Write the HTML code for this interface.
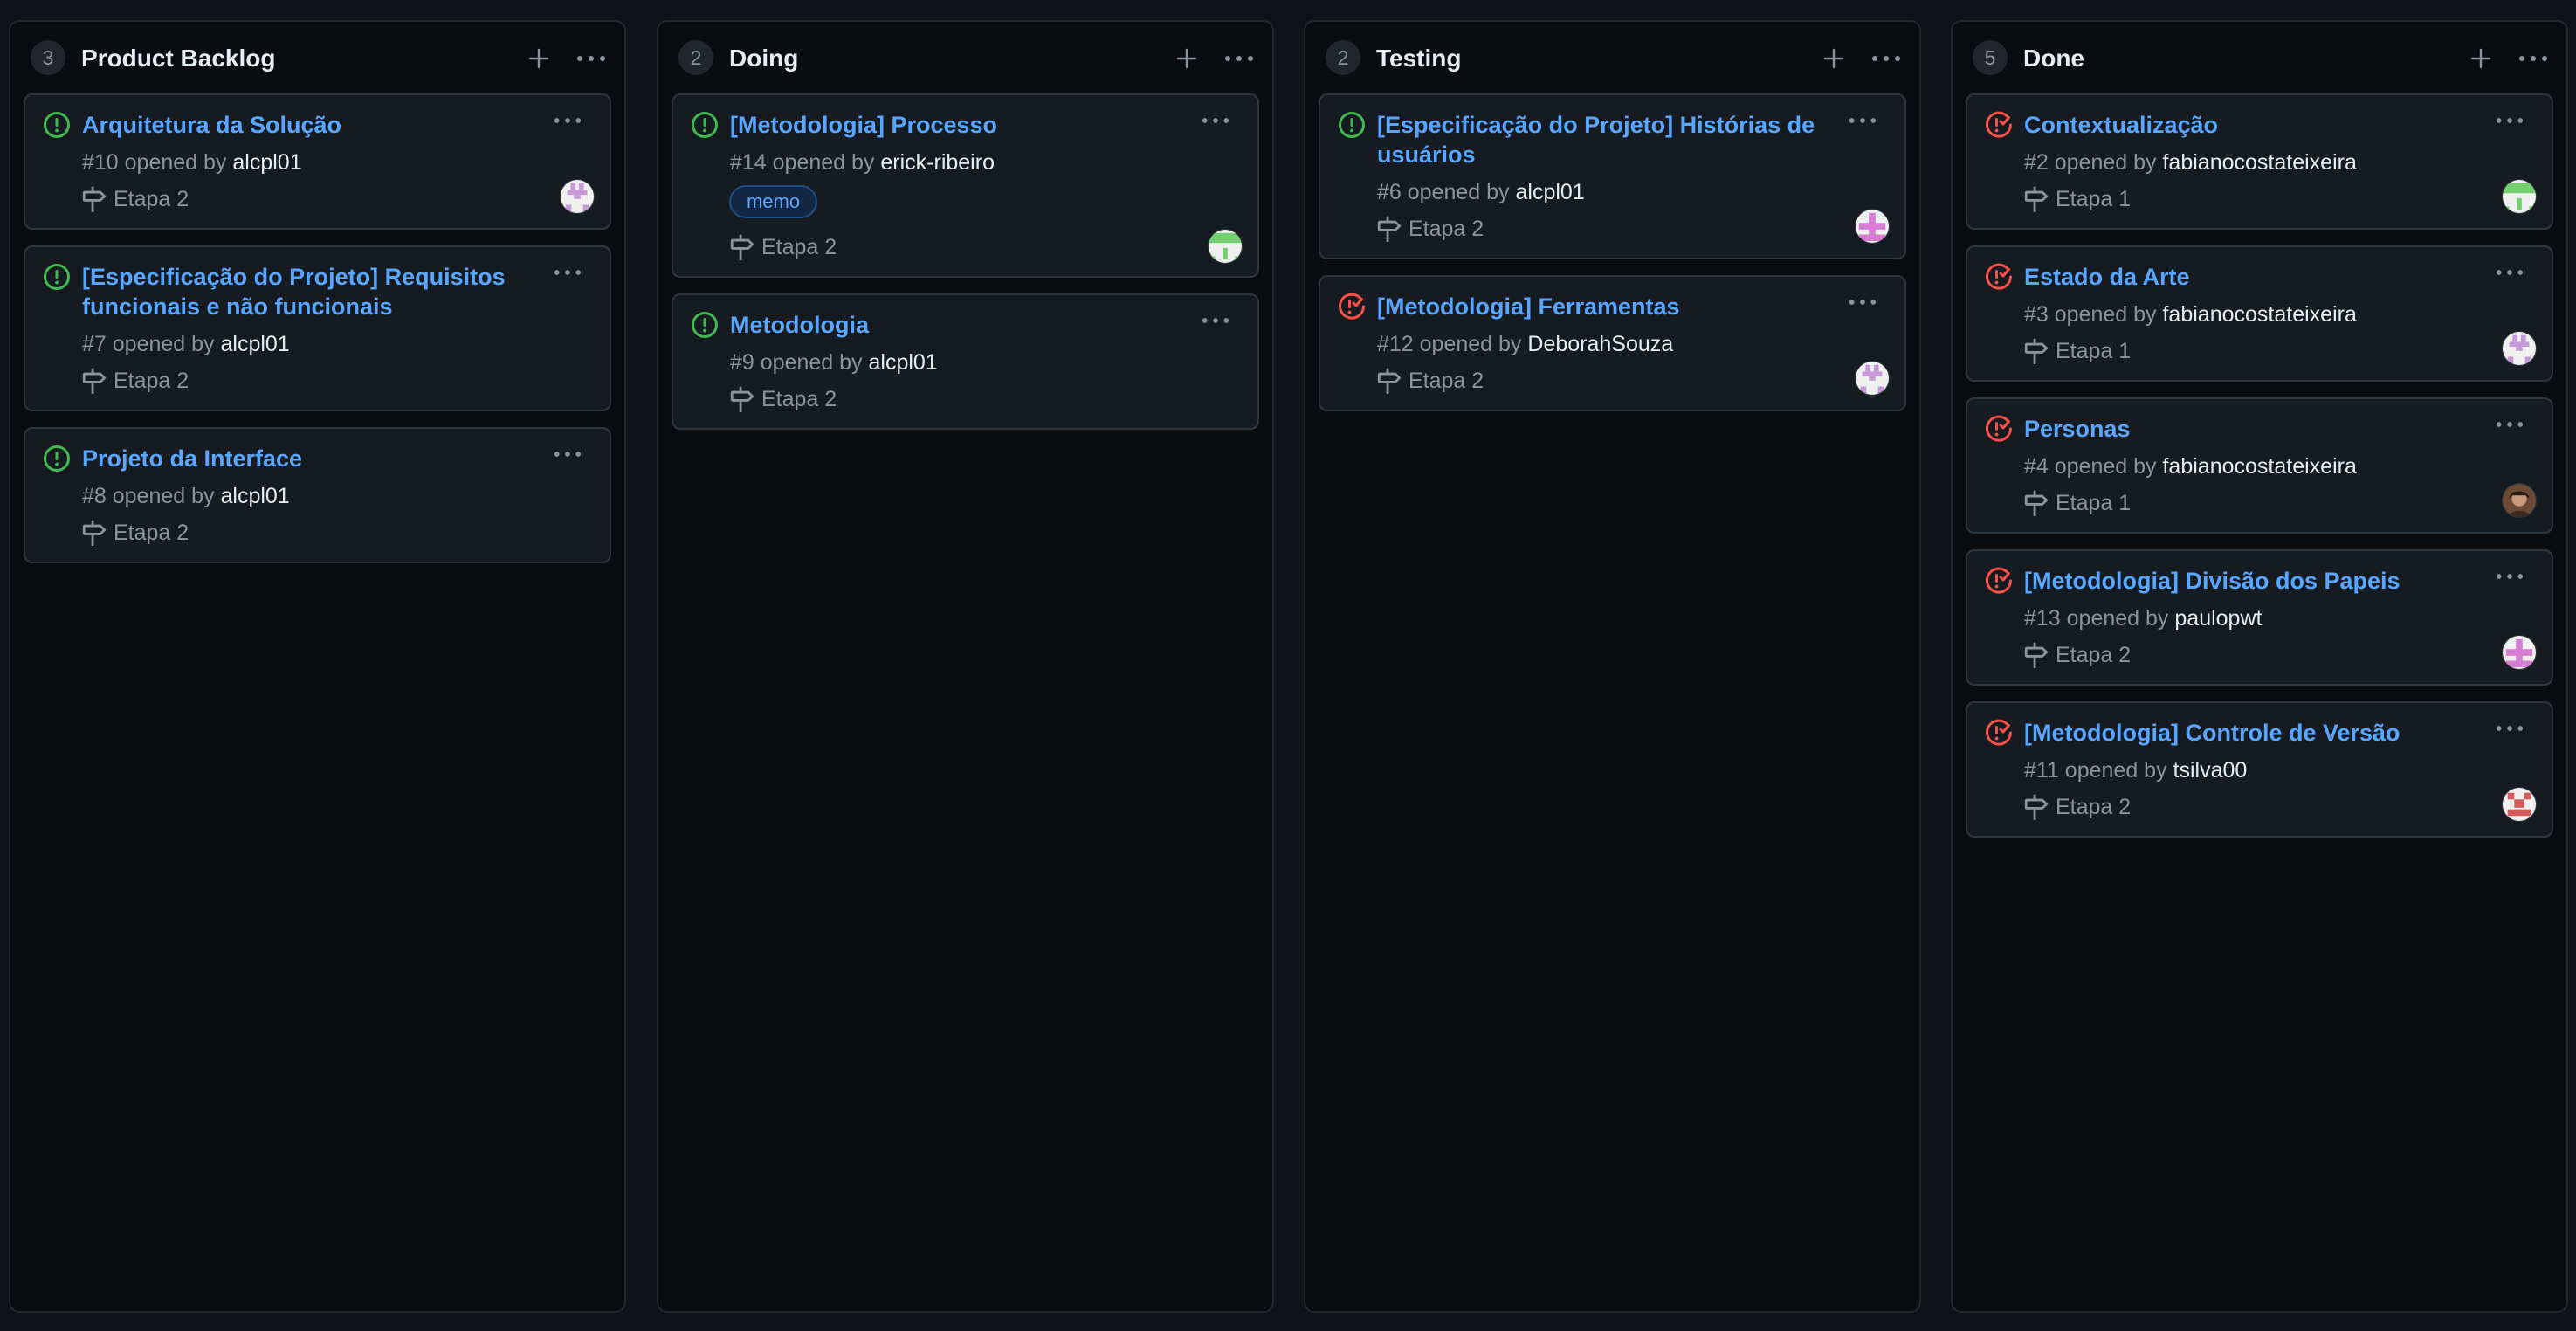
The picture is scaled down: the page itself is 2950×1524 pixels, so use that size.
<!DOCTYPE html>
<html><head><meta charset="utf-8">
<style>
*{box-sizing:border-box;margin:0;padding:0}
html,body{width:2950px;height:1524px;background:#0f1217;overflow:hidden;font-family:"Liberation Sans",sans-serif}
.col{position:absolute;top:23px;width:707px;height:1480px;background:#0a0c10;border:2px solid #23272e;border-radius:12px}
.hdr{position:absolute;top:0;left:0;right:0;height:84px}
.badge{position:absolute;left:23px;top:21px;width:40px;height:40px;border-radius:50%;background:#21262d;color:#8b949e;font-size:23px;line-height:40px;text-align:center}
.htitle{position:absolute;left:81px;top:25px;font-size:28px;font-weight:700;color:#e6edf3;line-height:34px}
.plus{position:absolute;left:593px;top:30px}
.hdots{position:absolute;left:648px;top:38px}
.card{position:absolute;left:15px;width:673px;background:#161b22;border:2px solid #30363d;border-radius:10px;padding:17px 0 0 0}
.ic{position:absolute;left:20px;top:18px}
.title{margin-left:65px;width:530px;font-size:27px;font-weight:700;color:#58a6ff;line-height:34px}
.meta{margin-left:65px;margin-top:6px;font-size:25px;color:#8b949e;line-height:40px;height:40px}
.meta b{font-weight:400;color:#e6edf3}
.et{margin-left:65px;margin-top:2px;font-size:25px;color:#8b949e;line-height:40px;height:40px;display:flex;align-items:center}
.et svg{margin-right:8px;margin-left:-2px}
.cdots{position:absolute;right:32px;top:25px}
.av{position:absolute;right:17px;bottom:16px;width:40px;height:40px;border-radius:50%;overflow:hidden;border:1px solid #30363d}
.memo{margin-left:64px;margin-top:6px;width:101px;height:38px;border:2px solid #1f4d86;background:#112743;border-radius:19px;color:#58a6ff;font-size:22px;line-height:34px;text-align:center}
</style></head><body>

<svg width="0" height="0" style="position:absolute">
<defs>
<symbol id="open" viewBox="0 0 32 32"><circle cx="16" cy="16" r="13.5" fill="none" stroke="#3fb950" stroke-width="3"/><rect x="14.5" y="8" width="3" height="10" rx="1.5" fill="#3fb950"/><circle cx="16" cy="22.5" r="1.9" fill="#3fb950"/></symbol>
<symbol id="closed" viewBox="0 0 32 32"><path d="M25.5 6A13.5 13.5 0 1 0 29.5 16" fill="none" stroke="#f85149" stroke-width="3" stroke-linecap="round"/><rect x="12" y="8" width="3" height="10" rx="1.5" fill="#f85149"/><circle cx="13.5" cy="22.5" r="1.9" fill="#f85149"/><path d="M18 12l3 3 6.5-7.5" fill="none" stroke="#f85149" stroke-width="3" stroke-linecap="round" stroke-linejoin="round"/></symbol>
<symbol id="ms" viewBox="0 0 16 16"><path d="M7.5 1v2M7.5 10v5.5" stroke="#8b949e" stroke-width="1.5" stroke-linecap="round"/><path d="M2.75 3.75h9.4l2.6 2.5-2.6 2.5h-9.4a.5.5 0 0 1-.5-.5v-4a.5.5 0 0 1 .5-.5z" fill="none" stroke="#8b949e" stroke-width="1.5" stroke-linejoin="round"/></symbol>
<symbol id="dots" viewBox="0 0 34 8"><circle cx="4" cy="4" r="3" fill="#8b949e"/><circle cx="17" cy="4" r="3" fill="#8b949e"/><circle cx="30" cy="4" r="3" fill="#8b949e"/></symbol>
<symbol id="plus" viewBox="0 0 24 24"><path d="M12 2v20M2 12h20" stroke="#8b949e" stroke-width="2.4" stroke-linecap="round"/></symbol>
<symbol id="avp" viewBox="0 0 40 40"><rect width="40" height="40" fill="#f0f0f0"/><rect x="12" y="4" width="6" height="8" fill="#c69ad9"/><rect x="22" y="4" width="6" height="8" fill="#c69ad9"/><rect x="8" y="12" width="24" height="6" fill="#c69ad9"/><rect x="16" y="18" width="8" height="5" fill="#c69ad9"/><rect x="6" y="30" width="7" height="8" fill="#c69ad9"/><rect x="27" y="30" width="7" height="8" fill="#c69ad9"/></symbol>
<symbol id="avk" viewBox="0 0 40 40"><rect width="40" height="40" fill="#f0f0f0"/><rect x="16" y="4" width="8" height="32" fill="#d67ed3"/><rect x="4" y="16" width="32" height="8" fill="#d67ed3"/><rect x="4" y="30" width="32" height="8" fill="#d67ed3"/></symbol>
<symbol id="avg" viewBox="0 0 40 40"><rect width="40" height="40" fill="#f0f0f0"/><rect x="0" y="4" width="40" height="12" fill="#72d06e"/><rect x="17" y="22" width="6" height="14" fill="#72d06e"/><rect x="0" y="32" width="8" height="8" fill="#72d06e"/><rect x="32" y="32" width="8" height="8" fill="#72d06e"/></symbol>
<symbol id="avr" viewBox="0 0 40 40"><rect width="40" height="40" fill="#f0f0f0"/><rect x="6" y="6" width="8" height="8" fill="#d55a5a"/><rect x="26" y="6" width="8" height="8" fill="#d55a5a"/><rect x="14" y="14" width="12" height="10" fill="#d55a5a"/><rect x="6" y="26" width="28" height="8" fill="#d55a5a"/></symbol>
<symbol id="avph" viewBox="0 0 40 40"><rect width="40" height="40" fill="#6b4a36"/><circle cx="20" cy="18" r="9" fill="#c79a7c"/><path d="M6 40c2-10 26-10 28 0z" fill="#3a2a22"/><path d="M8 18c0-12 24-12 24 0l-4-4h-16z" fill="#2a1d16"/></symbol>
</defs></svg>

<!-- Column 1 -->
<div class="col" style="left:10px">
 <div class="hdr"><div class="badge">3</div><div class="htitle">Product Backlog</div>
 <svg class="plus" width="24" height="24"><use href="#plus"/></svg><svg class="hdots" width="34" height="8"><use href="#dots"/></svg></div>
 <div class="card" style="top:82px;height:156px"><svg class="ic" width="32" height="32"><use href="#open"/></svg><svg class="cdots" width="32" height="8"><use href="#dots"/></svg>
  <div class="title">Arquitetura da Solução</div><div class="meta">#10 opened by <b>alcpl01</b></div><div class="et"><svg width="30" height="30"><use href="#ms"/></svg>Etapa 2</div><svg class="av"><use href="#avp"/></svg></div>
 <div class="card" style="top:256px;height:190px"><svg class="ic" width="32" height="32"><use href="#open"/></svg><svg class="cdots" width="32" height="8"><use href="#dots"/></svg>
  <div class="title">[Especificação do Projeto] Requisitos funcionais e não funcionais</div><div class="meta">#7 opened by <b>alcpl01</b></div><div class="et"><svg width="30" height="30"><use href="#ms"/></svg>Etapa 2</div></div>
 <div class="card" style="top:464px;height:156px"><svg class="ic" width="32" height="32"><use href="#open"/></svg><svg class="cdots" width="32" height="8"><use href="#dots"/></svg>
  <div class="title">Projeto da Interface</div><div class="meta">#8 opened by <b>alcpl01</b></div><div class="et"><svg width="30" height="30"><use href="#ms"/></svg>Etapa 2</div></div>
</div>

<!-- Column 2 -->
<div class="col" style="left:752px">
 <div class="hdr"><div class="badge">2</div><div class="htitle">Doing</div>
 <svg class="plus" width="24" height="24"><use href="#plus"/></svg><svg class="hdots" width="34" height="8"><use href="#dots"/></svg></div>
 <div class="card" style="top:82px;height:211px"><svg class="ic" width="32" height="32"><use href="#open"/></svg><svg class="cdots" width="32" height="8"><use href="#dots"/></svg>
  <div class="title">[Metodologia] Processo</div><div class="meta">#14 opened by <b>erick-ribeiro</b></div><div class="memo">memo</div><div class="et" style="margin-top:13px"><svg width="30" height="30"><use href="#ms"/></svg>Etapa 2</div><svg class="av" style="bottom:14px"><use href="#avg"/></svg></div>
 <div class="card" style="top:311px;height:156px"><svg class="ic" width="32" height="32"><use href="#open"/></svg><svg class="cdots" width="32" height="8"><use href="#dots"/></svg>
  <div class="title">Metodologia</div><div class="meta">#9 opened by <b>alcpl01</b></div><div class="et"><svg width="30" height="30"><use href="#ms"/></svg>Etapa 2</div></div>
</div>

<!-- Column 3 -->
<div class="col" style="left:1493px">
 <div class="hdr"><div class="badge">2</div><div class="htitle">Testing</div>
 <svg class="plus" width="24" height="24"><use href="#plus"/></svg><svg class="hdots" width="34" height="8"><use href="#dots"/></svg></div>
 <div class="card" style="top:82px;height:190px"><svg class="ic" width="32" height="32"><use href="#open"/></svg><svg class="cdots" width="32" height="8"><use href="#dots"/></svg>
  <div class="title">[Especificação do Projeto] Histórias de usuários</div><div class="meta">#6 opened by <b>alcpl01</b></div><div class="et"><svg width="30" height="30"><use href="#ms"/></svg>Etapa 2</div><svg class="av"><use href="#avk"/></svg></div>
 <div class="card" style="top:290px;height:156px"><svg class="ic" width="32" height="32"><use href="#closed"/></svg><svg class="cdots" width="32" height="8"><use href="#dots"/></svg>
  <div class="title">[Metodologia] Ferramentas</div><div class="meta">#12 opened by <b>DeborahSouza</b></div><div class="et"><svg width="30" height="30"><use href="#ms"/></svg>Etapa 2</div><svg class="av"><use href="#avp"/></svg></div>
</div>

<!-- Column 4 -->
<div class="col" style="left:2234px">
 <div class="hdr"><div class="badge">5</div><div class="htitle">Done</div>
 <svg class="plus" width="24" height="24"><use href="#plus"/></svg><svg class="hdots" width="34" height="8"><use href="#dots"/></svg></div>
 <div class="card" style="top:82px;height:156px"><svg class="ic" width="32" height="32"><use href="#closed"/></svg><svg class="cdots" width="32" height="8"><use href="#dots"/></svg>
  <div class="title">Contextualização</div><div class="meta">#2 opened by <b>fabianocostateixeira</b></div><div class="et"><svg width="30" height="30"><use href="#ms"/></svg>Etapa 1</div><svg class="av"><use href="#avg"/></svg></div>
 <div class="card" style="top:256px;height:156px"><svg class="ic" width="32" height="32"><use href="#closed"/></svg><svg class="cdots" width="32" height="8"><use href="#dots"/></svg>
  <div class="title">Estado da Arte</div><div class="meta">#3 opened by <b>fabianocostateixeira</b></div><div class="et"><svg width="30" height="30"><use href="#ms"/></svg>Etapa 1</div><svg class="av"><use href="#avp"/></svg></div>
 <div class="card" style="top:430px;height:156px"><svg class="ic" width="32" height="32"><use href="#closed"/></svg><svg class="cdots" width="32" height="8"><use href="#dots"/></svg>
  <div class="title">Personas</div><div class="meta">#4 opened by <b>fabianocostateixeira</b></div><div class="et"><svg width="30" height="30"><use href="#ms"/></svg>Etapa 1</div><svg class="av"><use href="#avph"/></svg></div>
 <div class="card" style="top:604px;height:156px"><svg class="ic" width="32" height="32"><use href="#closed"/></svg><svg class="cdots" width="32" height="8"><use href="#dots"/></svg>
  <div class="title">[Metodologia] Divisão dos Papeis</div><div class="meta">#13 opened by <b>paulopwt</b></div><div class="et"><svg width="30" height="30"><use href="#ms"/></svg>Etapa 2</div><svg class="av"><use href="#avk"/></svg></div>
 <div class="card" style="top:778px;height:156px"><svg class="ic" width="32" height="32"><use href="#closed"/></svg><svg class="cdots" width="32" height="8"><use href="#dots"/></svg>
  <div class="title">[Metodologia] Controle de Versão</div><div class="meta">#11 opened by <b>tsilva00</b></div><div class="et"><svg width="30" height="30"><use href="#ms"/></svg>Etapa 2</div><svg class="av"><use href="#avr"/></svg></div>
</div>

</body></html>
